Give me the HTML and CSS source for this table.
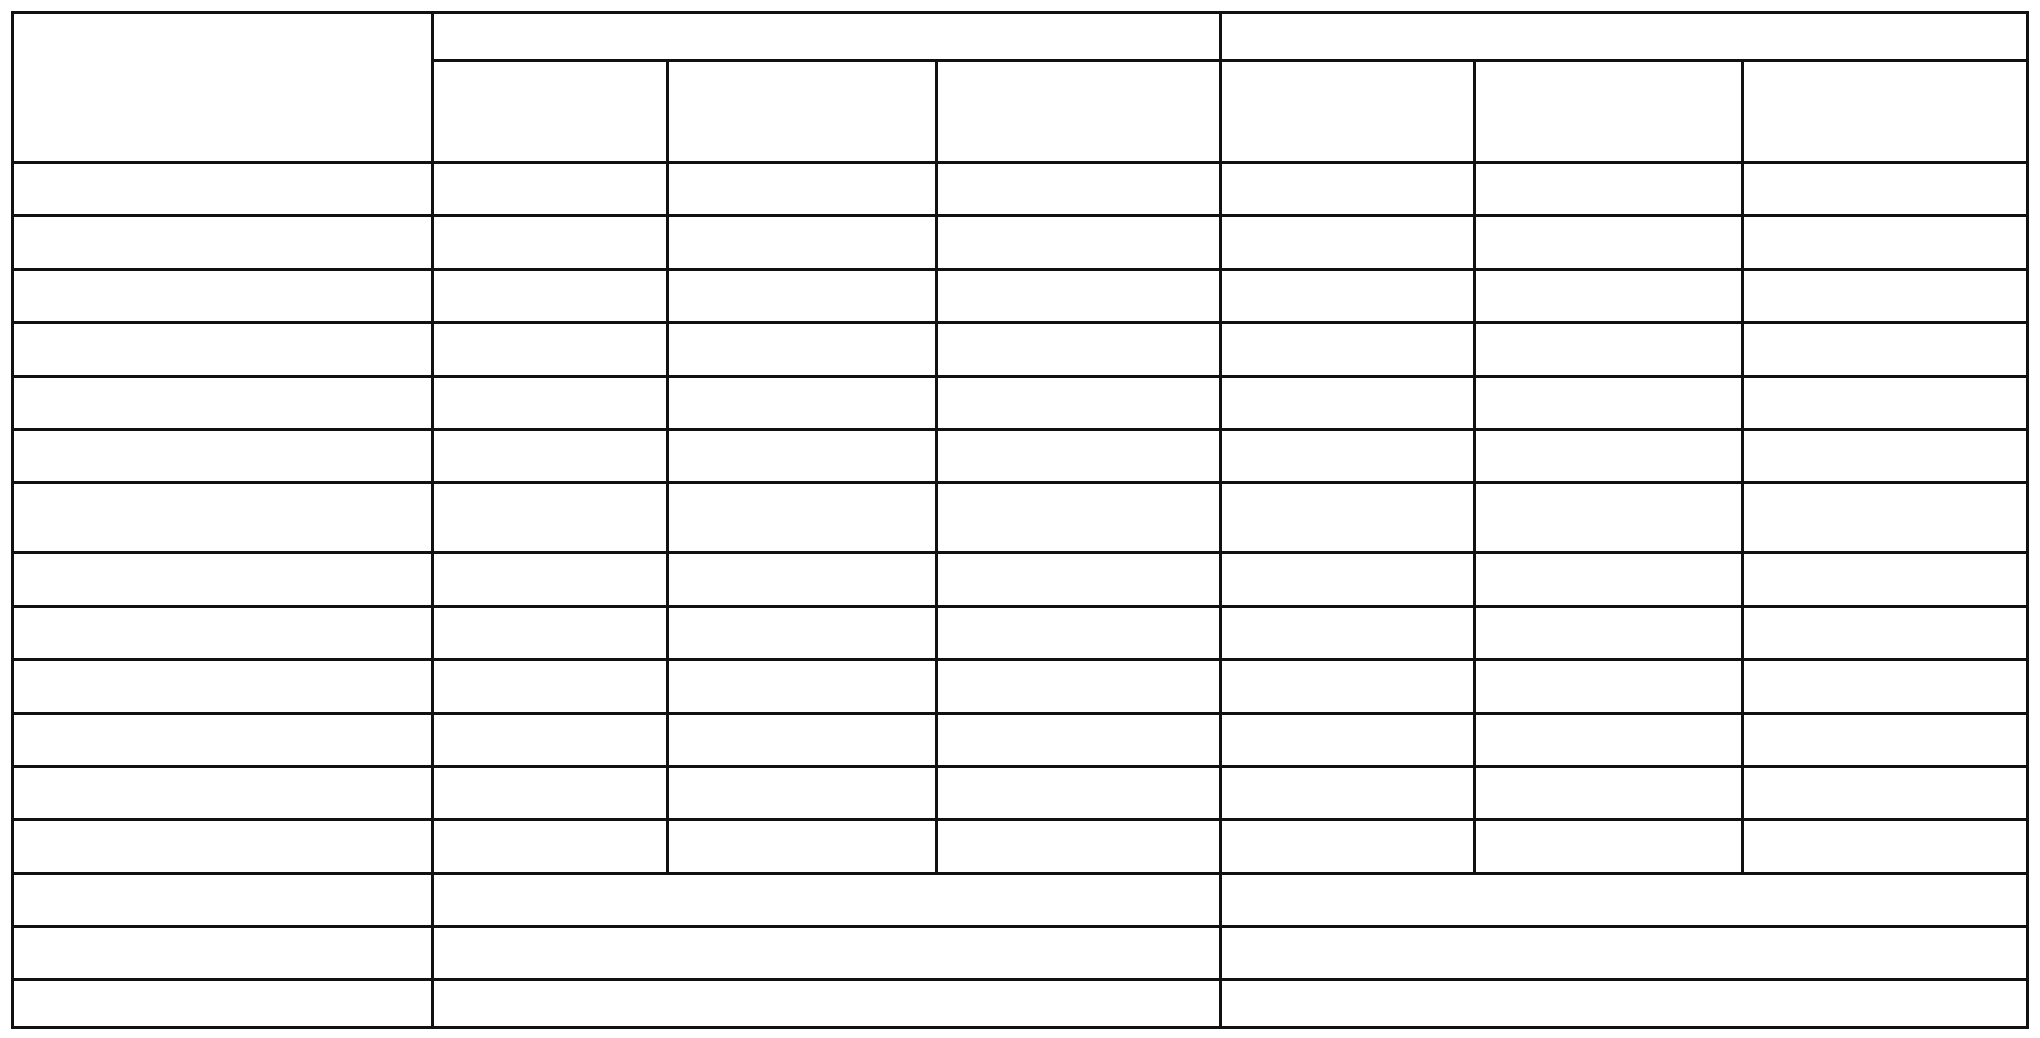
FILE: index.html
```html
<!DOCTYPE html>
<html>
<head>
<meta charset="utf-8">
<link rel="stylesheet" href="styles.css">
</head>
<body>
<table class="grid">
  <colgroup>
    <col class="c1"><col class="c2"><col class="c3"><col class="c4"><col class="c5"><col class="c6"><col class="c7">
  </colgroup>
  <thead>
    <tr class="h1"><th rowspan="2"></th><th colspan="3"></th><th colspan="3"></th></tr>
    <tr class="h2"><th></th><th></th><th></th><th></th><th></th><th></th></tr>
  </thead>
  <tbody>
    <tr class="r"><td></td><td></td><td></td><td></td><td></td><td></td><td></td></tr>
    <tr class="r"><td></td><td></td><td></td><td></td><td></td><td></td><td></td></tr>
    <tr class="r"><td></td><td></td><td></td><td></td><td></td><td></td><td></td></tr>
    <tr class="r"><td></td><td></td><td></td><td></td><td></td><td></td><td></td></tr>
    <tr class="r"><td></td><td></td><td></td><td></td><td></td><td></td><td></td></tr>
    <tr class="r"><td></td><td></td><td></td><td></td><td></td><td></td><td></td></tr>
    <tr class="tall"><td></td><td></td><td></td><td></td><td></td><td></td><td></td></tr>
    <tr class="r"><td></td><td></td><td></td><td></td><td></td><td></td><td></td></tr>
    <tr class="r"><td></td><td></td><td></td><td></td><td></td><td></td><td></td></tr>
    <tr class="r"><td></td><td></td><td></td><td></td><td></td><td></td><td></td></tr>
    <tr class="r"><td></td><td></td><td></td><td></td><td></td><td></td><td></td></tr>
    <tr class="r"><td></td><td></td><td></td><td></td><td></td><td></td><td></td></tr>
    <tr class="r"><td></td><td></td><td></td><td></td><td></td><td></td><td></td></tr>
    <tr class="r"><td></td><td colspan="3"></td><td colspan="3"></td></tr>
    <tr class="r"><td></td><td colspan="3"></td><td colspan="3"></td></tr>
    <tr class="last"><td></td><td colspan="3"></td><td colspan="3"></td></tr>
  </tbody>
</table>
</body>
</html>
```

FILE: styles.css
```css
html, body {
  margin: 0;
  padding: 0;
  background: #ffffff;
  font-family: "Liberation Sans", Arial, sans-serif;
}

body {
  padding: 11px 0 0 11px;
}

.grid {
  border-collapse: collapse;
  table-layout: fixed;
  width: 2017px;
}

.grid th,
.grid td {
  border: 3px solid #111;
  padding: 0;
}

.c1 { width: 420px; }
.c2 { width: 235px; }
.c3 { width: 269px; }
.c4 { width: 284px; }
.c5 { width: 254px; }
.c6 { width: 268px; }
.c7 { width: 285px; }

.h1 { height: 48px; }
.h2 { height: 102px; }
.r { height: 53.4px; }
.tall { height: 70px; }
.last { height: 48px; }
```
